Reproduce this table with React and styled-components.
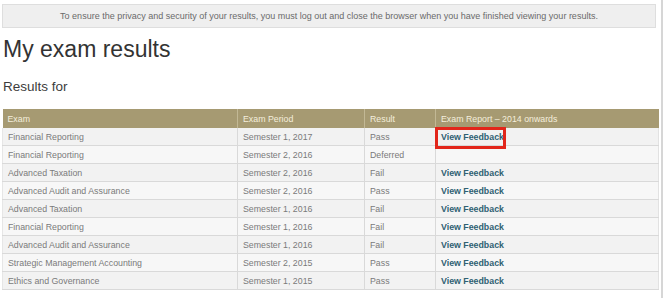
import React from "react";
import styled, { createGlobalStyle } from "styled-components";

const GlobalStyle = createGlobalStyle`
  body {
    margin: 0;
    background: #ffffff;
    font-family: "Liberation Sans", Arial, sans-serif;
  }
`;

const Page = styled.div`
  width: 663px;
  height: 298px;
  overflow: hidden;
  position: relative;
  padding-top: 4px;
  box-sizing: border-box;
  border-right: 2px solid #d6d6d6;
`;

const Notice = styled.div`
  margin: 0 5px 0 2px;
  height: 24px;
  box-sizing: border-box;
  background: #efefef;
  border: 1px solid #dedede;
  display: flex;
  align-items: center;
  justify-content: center;
  font-size: 9px;
  color: #6a6a6a;
`;

const Title = styled.h1`
  margin: 6px 0 0 3px;
  font-size: 23px;
  line-height: 28px;
  font-weight: 400;
  color: #333333;
  transform: scaleY(1.05);
  transform-origin: left top;
`;

const Subtitle = styled.h2`
  margin: 17px 0 0 3px;
  font-size: 13.5px;
  line-height: 16px;
  font-weight: 400;
  color: #3c3c3c;
`;

const Table = styled.table`
  margin: 14px 0 0 2px;
  width: 656px;
  border-collapse: collapse;
  table-layout: fixed;
  font-size: 8.8px;
`;

const HeadCell = styled.th`
  background: #a69a72;
  color: #f4eedc;
  font-weight: 400;
  text-align: left;
  height: 19px;
  padding: 0 5px;
  border-left: 1px solid #c2b895;
  &:first-child {
    border-left: none;
  }
`;

const Row = styled.tr`
  background: ${({ $alt }) => ($alt ? "#f7f7f7" : "#f2f2f2")};
`;

const Cell = styled.td`
  height: 17px;
  padding: 0 5px;
  color: #7a7a7a;
  border-bottom: 1px solid #d9d9d9;
  border-left: 1px solid #d9d9d9;
  white-space: nowrap;
  &:first-child {
    border-left: 1px solid #e6e6e6;
  }
  &:last-child {
    border-right: 1px solid #e2e2e2;
  }
`;

const FeedbackCell = styled(Cell)`
  position: relative;
`;

const Feedback = styled.a`
  color: #2f6173;
  font-weight: 700;
  text-decoration: none;
`;

const Highlight = styled.span`
  position: absolute;
  left: -1px;
  top: -1px;
  width: 71px;
  height: 22px;
  box-sizing: border-box;
  border: 3px solid #e2261b;
`;

const rows = [
  ["Financial Reporting", "Semester 1, 2017", "Pass", true],
  ["Financial Reporting", "Semester 2, 2016", "Deferred", false],
  ["Advanced Taxation", "Semester 2, 2016", "Fail", true],
  ["Advanced Audit and Assurance", "Semester 2, 2016", "Pass", true],
  ["Advanced Taxation", "Semester 1, 2016", "Fail", true],
  ["Financial Reporting", "Semester 1, 2016", "Fail", true],
  ["Advanced Audit and Assurance", "Semester 1, 2016", "Fail", true],
  ["Strategic Management Accounting", "Semester 2, 2015", "Pass", true],
  ["Ethics and Governance", "Semester 1, 2015", "Pass", true],
];

export default function App() {
  return (
    <Page>
      <GlobalStyle />
      <Notice>
        To ensure the privacy and security of your results, you must log out and close the browser when you have finished viewing your results.
      </Notice>
      <Title>My exam results</Title>
      <Subtitle>Results for</Subtitle>
      <Table>
        <colgroup>
          <col style={{ width: 235 }} />
          <col style={{ width: 127 }} />
          <col style={{ width: 71 }} />
          <col style={{ width: 223 }} />
        </colgroup>
        <thead>
          <tr>
            <HeadCell>Exam</HeadCell>
            <HeadCell>Exam Period</HeadCell>
            <HeadCell>Result</HeadCell>
            <HeadCell>Exam Report – 2014 onwards</HeadCell>
          </tr>
        </thead>
        <tbody>
          {rows.map(([exam, period, result, link], i) => (
            <Row key={i} $alt={i % 2 === 1}>
              <Cell>{exam}</Cell>
              <Cell>{period}</Cell>
              <Cell>{result}</Cell>
              <FeedbackCell>
                {link && <Feedback href="#">View Feedback</Feedback>}
                {i === 0 && <Highlight />}
              </FeedbackCell>
            </Row>
          ))}
        </tbody>
      </Table>
    </Page>
  );
}
